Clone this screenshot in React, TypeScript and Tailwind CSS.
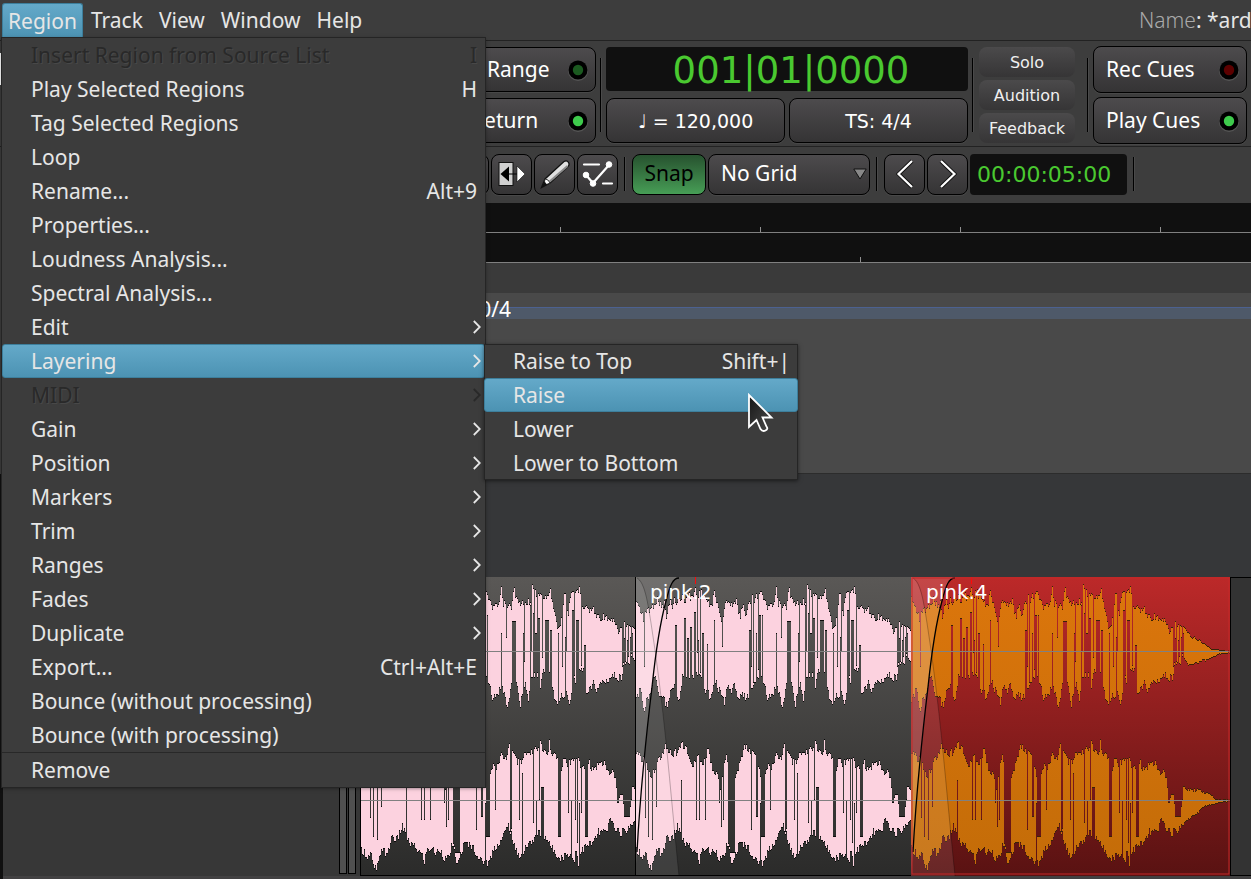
import React from 'react';

type Pt = [number, number];
type Notch = [number, number, number];

/* Envelope control points of the clip: x and y on a grid three times finer than the drawing. */
const TOP_1: Pt[] = [[36,85],[40,88],[45,105],[50,115],[57,125],[60,150],[63,155],[66,135],[72,110],[80,120],[88,105],[95,92],[105,88],[112,100],[118,110],[122,90],[130,150],[134,110],[140,95],[150,105],[153,85],[160,95],[170,80],[185,85],[195,75],[205,80],[212,70],[215,42],[219,75],[232,65],[245,80],[255,100],[266,108],[271,46],[275,85],[285,105],[290,130],[297,165],[303,110],[312,85],[325,100],[340,95],[350,140],[355,100],[370,130],[375,95],[385,80],[395,85],[405,65],[415,55],[420,90],[430,105],[445,110],[455,90],[458,45],[462,90],[475,110],[490,105],[497,55],[505,85],[515,105],[525,95],[549,88],[552,48],[560,65],[575,75],[590,80],[600,70],[604,55],[612,90],[620,120],[627,165],[635,170],[642,115],[650,65],[655,110],[660,125],[668,75],[680,65],[690,55],[698,62],[703,105],[712,105],[725,120],[735,115],[745,135],[760,140],[770,135],[785,155],[797,150],[805,175],[815,180],[825,160],[835,165],[850,170],[860,180],[875,200],[890,205],[905,215],[925,230],[935,238],[955,240],[970,243],[992,244]];
const BOT_1: Pt[] = [[36,390],[40,370],[45,380],[52,355],[57,400],[62,435],[68,400],[75,385],[83,375],[88,340],[95,320],[103,345],[110,395],[118,375],[125,400],[131,405],[135,395],[140,370],[148,365],[155,335],[166,400],[172,375],[175,330],[185,320],[195,325],[222,320],[235,325],[245,380],[252,360],[262,402],[265,370],[275,335],[290,370],[297,385],[304,408],[312,345],[320,365],[330,355],[337,350],[347,410],[352,380],[375,385],[380,350],[395,345],[410,315],[425,345],[432,385],[450,370],[460,345],[470,380],[478,425],[483,380],[492,330],[505,340],[516,420],[521,375],[530,345],[541,392],[547,335],[565,320],[575,360],[585,310],[598,330],[607,300],[615,370],[625,400],[630,415],[640,380],[655,375],[662,405],[670,360],[680,335],[695,300],[709,310],[713,380],[725,365],[735,345],[745,362],[760,340],[775,335],[795,320],[820,328],[823,290],[855,270],[870,288],[885,280],[905,275],[925,268],[940,262],[960,252],[992,245]];
const TOP_2: Pt[] = [[36,560],[45,545],[55,570],[62,545],[68,570],[75,600],[85,620],[92,600],[100,570],[107,550],[115,565],[125,510],[135,540],[150,545],[165,545],[174,510],[180,535],[186,516],[195,555],[205,585],[215,580],[225,560],[240,570],[256,538],[262,580],[275,600],[285,620],[292,650],[300,600],[310,545],[315,600],[335,620],[350,575],[365,525],[375,540],[390,545],[400,570],[412,610],[425,610],[432,590],[445,590],[460,550],[470,570],[475,555],[482,508],[487,545],[498,545],[505,575],[520,565],[535,550],[550,540],[565,535],[577,508],[582,540],[600,540],[604,512],[609,550],[625,560],[640,600],[647,545],[655,590],[670,560],[685,560],[697,580],[705,590],[722,575],[735,600],[750,575],[770,580],[785,605],[797,600],[803,640],[808,690],[820,655],[828,715],[845,715],[852,650],[865,660],[895,660],[915,665],[935,675],[950,690],[992,690]];
const BOT_2: Pt[] = [[36,840],[48,850],[58,865],[68,855],[75,895],[85,900],[95,865],[105,830],[115,867],[122,840],[130,800],[145,815],[155,790],[162,770],[170,795],[180,820],[195,830],[210,845],[222,860],[228,878],[235,845],[250,835],[262,855],[275,840],[290,872],[300,868],[310,830],[320,855],[328,892],[335,860],[345,830],[355,825],[370,830],[385,855],[395,875],[410,880],[422,882],[435,840],[455,820],[480,770],[488,790],[500,845],[518,862],[530,835],[550,820],[570,790],[590,800],[605,830],[625,855],[635,867],[660,855],[673,865],[677,885],[681,850],[688,850],[691,897],[695,850],[715,830],[735,820],[750,790],[775,790],[785,750],[800,775],[815,792],[840,780],[860,750],[890,735],[910,710],[930,705],[950,700],[970,692],[992,691]];

/* Dark slots cut from above ("down") or from below ("up"): start, width, depth. */
const DOWN_1: Notch[] = [[63,3,290],[222,3,250],[231,3,320],[297,3,230],[384,3,290],[390,3,345],[405,3,300],[475,3,205],[529,3,275],[549,3,245],[559,3,310],[568,3,310],[583,3,265],[641,3,290],[653,3,245],[679,3,330],[699,3,290],[823,4,290],[832,3,285],[840,3,260],[848,3,280]];
const UP_1: Notch[] = [[156,6,165],[184,6,145],[193,6,205],[201,5,170],[213,6,125],[226,3,210],[238,5,190],[252,3,222],[273,3,150],[378,6,180],[399,3,190],[408,5,135],[417,3,135],[458,3,190],[492,11,152],[526,5,190],[546,4,75],[556,3,130],[562,4,190],[571,5,145],[592,12,150],[607,6,180],[629,3,190],[651,3,200],[671,7,120],[684,8,150],[708,5,225],[827,5,205],[836,3,210],[845,3,200],[851,4,190]];
const DOWN_2: Notch[] = [[66,3,745],[75,3,800],[86,5,810],[98,3,710],[218,3,750],[229,3,750],[247,3,750],[288,4,700],[294,4,770],[300,3,750],[316,20,850],[384,3,780],[400,5,740],[413,12,800],[441,3,720],[486,6,790],[514,3,750],[556,3,760],[574,3,690],[629,10,800],[660,3,730],[680,3,750],[688,3,820],[699,3,730],[711,9,800],[808,6,700],[827,20,740]];
const UP_2: Notch[] = [[173,3,630],[412,3,700],[521,3,610],[563,5,690],[580,9,650],[668,3,690],[692,3,700]];

const CLIP = 319;

function level(points: Pt[], x: number) {
  let i = 1;
  while (i < points.length - 1 && points[i][0] < x) i++;
  const [ax, ay] = points[i - 1];
  const [bx, by] = points[i];
  return ay + ((by - ay) * (x - ax)) / (bx - ax);
}

function rough(i: number, seed: number) {
  const n = Math.sin(i * 12.9898 + seed * 78.233) * 43758.5453;
  return n - Math.floor(n);
}

function cut(notches: Notch[], x: number) {
  const hit = notches.find(([start, width]) => x + 1 >= start && x + 1 < start + width);
  return hit ? hit[2] : null;
}

function channel(top: Pt[], bottom: Pt[], down: Notch[], up: Notch[], seed: number) {
  const columns: Pt[] = [];
  for (let i = 0; i < CLIP; i++) {
    const x = 36 + i * 3;
    const fade = x > 920 ? 0.15 : x > 850 ? 0.4 : 1;
    let a = level(top, x) + (rough(i, seed) * 24 - 8) * fade;
    let b = level(bottom, x) - (rough(i, seed + 1) * 24 - 8) * fade;
    const d = cut(down, x);
    const u = cut(up, x);
    if (d !== null) a = Math.min(d, b - 6);
    else if (u !== null) b = Math.max(u, a + 6);
    columns.push([Math.round(a / 3 - 7), Math.max(Math.round(b / 3 - 7), Math.round(a / 3 - 7) + 1)]);
  }
  return columns;
}

const CHANNELS = [channel(TOP_1, BOT_1, DOWN_1, UP_1, 1), channel(TOP_2, BOT_2, DOWN_2, UP_2, 5)];

function Clip({ id, name, length, selected, fadeIn }: { id: string; name?: string; length: number; selected?: boolean; fadeIn?: boolean }) {
  const body = CHANNELS.map((c) => c.slice(0, length).map(([a, b], i) => `M${i + 0.5} ${a}V${b}`).join('')).join('');
  const tips = CHANNELS.map((c) =>
    c.slice(0, length).map(([a, b], i) => `M${i + 0.5} ${a - 1}v1M${i + 0.5} ${b}v1`).join(''),
  ).join('');
  return (
    <div className="relative shrink-0">
      <svg width={length} height={299} className="block" role="img" aria-label={name ?? 'pink'}>
        <defs>
          <linearGradient id={`${id}-back`} x1="0" y1="0" x2="0" y2="1">
            <stop offset="0" stopColor={selected ? '#bc2929' : '#5a5856'} />
            <stop offset="1" stopColor={selected ? '#591212' : '#2b2b2a'} />
          </linearGradient>
          <linearGradient id={`${id}-wave`} gradientUnits="userSpaceOnUse" x1="0" y1="0" x2="0" y2="299">
            <stop offset="0" stopColor={selected ? '#dc760c' : '#fcd2df'} />
            <stop offset="1" stopColor={selected ? '#c36c08' : '#fcd2df'} />
          </linearGradient>
        </defs>
        <rect width={length} height="299" fill={`url(#${id}-back)`} />
        <path d={body} stroke={`url(#${id}-wave)`} shapeRendering="crispEdges" />
        <path d={tips} stroke={selected ? '#3a2208' : '#0a0a0a'} shapeRendering="crispEdges" />
        <path d={`M0 74.5H${length}M0 223.5H${length}`} stroke="#808080" />
        {fadeIn && (
          <g>
            <path d="M0 0H44C38 1 35 8 31 24C25 46 21 72 17 110C11 160 5 220 2 275L0 299Z" fill="#fff" fillOpacity=".14" />
            <path d="M0 0C8 3 12 20 16 46C22 84 27 126 31 165C36 215 40 260 44 299H0Z" fill="#fff" fillOpacity=".09" />
            <path d="M2 1C9 5 12 20 16 46C22 84 27 126 31 165C36 215 40 260 44 299" fill="none" stroke="#000" strokeOpacity=".25" />
            <path d="M44 1C38 1 35 8 31 24C25 46 21 72 17 110C11 160 5 220 2 275" fill="none" stroke="#000" strokeWidth="1.3" />
          </g>
        )}
        {name && <path d="M60.5 0V7" stroke="#ff0808" />}
        {selected ? (
          <rect x="1" y="1" width={length - 2} height="296" fill="none" stroke="#c62828" />
        ) : (
          <path d={`M.5 0V299M0 298.5H${length}`} stroke="#000" />
        )}
      </svg>
      {name && <span className="absolute left-[15px] top-0 font-['DejaVu_Sans',sans-serif] text-[20px] leading-[30px] text-white">{name}</span>}
    </div>
  );
}

type Item = { label: string; keys?: string; sub?: boolean; off?: boolean; active?: boolean };

const REGION_ITEMS: Item[] = [
  { label: 'Insert Region from Source List', keys: 'I', off: true },
  { label: 'Play Selected Regions', keys: 'H' },
  { label: 'Tag Selected Regions' },
  { label: 'Loop' },
  { label: 'Rename...', keys: 'Alt+9' },
  { label: 'Properties...' },
  { label: 'Loudness Analysis...' },
  { label: 'Spectral Analysis...' },
  { label: 'Edit', sub: true },
  { label: 'Layering', sub: true, active: true },
  { label: 'MIDI', sub: true, off: true },
  { label: 'Gain', sub: true },
  { label: 'Position', sub: true },
  { label: 'Markers', sub: true },
  { label: 'Trim', sub: true },
  { label: 'Ranges', sub: true },
  { label: 'Fades', sub: true },
  { label: 'Duplicate', sub: true },
  { label: 'Export...', keys: 'Ctrl+Alt+E' },
  { label: 'Bounce (without processing)' },
  { label: 'Bounce (with processing)' },
];

const LAYER_ITEMS: Item[] = [
  { label: 'Raise to Top', keys: 'Shift+|' },
  { label: 'Raise', active: true },
  { label: 'Lower' },
  { label: 'Lower to Bottom' },
];

function MenuRow({ item }: { item: Item }) {
  const tone = item.off
    ? 'border-transparent text-[#292929] [text-shadow:1px_1px_0_#484848]'
    : item.active
      ? 'rounded-[3px] border-[#3d7f9c] bg-linear-to-b from-[#64a9c9] to-[#4c93b3] text-[#e6e6e6]'
      : 'border-transparent text-[#e6e6e6]';
  return (
    <button type="button" role="menuitem" disabled={item.off} className={`flex h-[34px] w-full items-center justify-between border pl-7 pr-[7px] pt-[2px] text-left ${tone}`}>
      <span>{item.label}</span>
      {item.keys && <span>{item.keys}</span>}
      {item.sub && (
        <svg width="8" height="14" viewBox="0 0 8 14" className="-mr-1 mb-[2px]" fill="none" stroke="currentColor" strokeWidth="1.8">
          <path d="M.8 1L6.8 7L.8 13" />
        </svg>
      )}
    </button>
  );
}

const KEY = 'border border-black bg-linear-to-b from-[#4d4b4d] to-[#353435] text-white shadow-[0_1px_0_#484848]';

function Led({ color }: { color: string }) {
  return (
    <svg width="22" height="22" viewBox="0 0 22 22" className="shrink-0">
      <circle cx="11" cy="12" r="10" fill="#555" />
      <circle cx="11" cy="11" r="9.5" fill="#000" />
      <circle cx="11" cy="11" r="5.2" fill={color} />
    </svg>
  );
}

function Divider({ short }: { short?: boolean }) {
  return <div className={`w-[2px] shrink-0 border-l border-black border-r border-r-[#4a4a4a] ${short ? 'h-[34px]' : 'h-[74px]'}`} />;
}

function LedKey({ label, color, className }: { label: string; color: string; className: string }) {
  return (
    <button type="button" className={`flex items-center justify-between rounded-[8px] pr-[6px] ${KEY} ${className}`}>
      <span>{label}</span>
      <Led color={color} />
    </button>
  );
}

function ToolKey({ label, children }: { label: string; children: React.ReactNode }) {
  return (
    <button type="button" aria-label={label} className={`flex size-[41px] shrink-0 items-center justify-center rounded-[8px] ${KEY}`}>
      {children}
    </button>
  );
}

function Ruler({ ticks }: { ticks: number[] }) {
  return (
    <div className="h-[30px] border-b border-[#808080] bg-[#101010]">
      <svg width="100%" height="29" className="block" aria-hidden="true">
        {ticks.map((x) => (
          <path key={x} d={`M${x + 0.5} 24V29`} stroke="#909090" />
        ))}
      </svg>
    </div>
  );
}

export default function App() {
  return (
    <div className="relative min-h-screen overflow-hidden bg-[#3d3d3d] font-['Noto_Sans','Open_Sans',sans-serif] text-[21px] text-[#e6e6e6]">
      <nav className="flex h-[41px] items-start justify-between overflow-hidden border-b border-[#222] pt-[3px] leading-[35px]">
        <div className="flex pl-[2px]" role="menubar">
          <button type="button" className="rounded-t-[3px] border border-b-0 border-[#3d7f9c] bg-linear-to-b from-[#64a9c9] to-[#4c93b3] px-[5px] leading-[34px]">
            Region
          </button>
          {['Track', 'View', 'Window', 'Help'].map((m) => (
            <button key={m} type="button" className="px-2">
              {m}
            </button>
          ))}
        </div>
        <div className="w-[112px] whitespace-nowrap">
          <span className="font-light text-[#aaa]">Name</span>: *ard
        </div>
      </nav>

      <section className="flex h-[106px] items-center border-b border-[#222] pr-1 pt-[3px]" aria-label="Transport">
        <div className="mb-[52px] h-8 w-[2px] shrink-0 bg-white" />
        <div className="ml-[484px] flex w-[110px] shrink-0 flex-col items-end gap-[6px] overflow-hidden">
          <LedKey label="Range" color="#1b5a20" className="h-[45px] w-[122px] pl-[12px]" />
          <LedKey label="Return" color="#3ecb4c" className="h-[45px] w-[134px] pl-[8px]" />
        </div>
        <div className="px-1">
          <Divider />
        </div>
        <div className="flex min-w-0 flex-1 flex-col gap-[7px] font-['DejaVu_Sans',sans-serif]">
          <div className="flex h-11 items-center justify-center rounded-[4px] bg-[#101010] pl-2 pt-[2px] text-[37px] leading-none text-[#4ac930]">001|01|0000</div>
          <div className="flex gap-1 text-[19px]">
            <button type="button" className={`h-[45px] flex-1 rounded-[8px] pt-[2px] ${KEY}`}>
              ♩ = 120,000
            </button>
            <button type="button" className={`h-[45px] flex-1 rounded-[8px] pt-[2px] ${KEY}`}>
              TS: 4/4
            </button>
          </div>
        </div>
        <div className="pl-1 pr-[5px]">
          <Divider />
        </div>
        <div className="flex w-24 shrink-0 flex-col gap-[3px] font-['DejaVu_Sans',sans-serif] text-base text-[#f0f0f0]">
          {['Solo', 'Audition', 'Feedback'].map((t) => (
            <button key={t} type="button" className="h-[30px] rounded-[8px] bg-linear-to-b from-[#4b4a4b] to-[#363536] pt-px">
              {t}
            </button>
          ))}
        </div>
        <div className="pl-3 pr-1">
          <Divider />
        </div>
        <div className="flex w-[154px] shrink-0 flex-col gap-1">
          <LedKey label="Rec Cues" color="#5c0000" className="h-[47px] pl-3" />
          <LedKey label="Play Cues" color="#3ecb4c" className="h-[47px] pl-3" />
        </div>
      </section>

      <section className="flex h-14 items-center gap-[2px] pb-[2px] pl-[448px]" aria-label="Editing">
        <ToolKey label="Audition">{null}</ToolKey>
        <ToolKey label="Timefx">
          <svg width="28" height="26" viewBox="0 0 28 26">
            <rect x="1" y="1.5" width="14" height="23" fill="#d0d0d0" stroke="#111" />
            <path d="M11 13H20" stroke="#000" />
            <path d="M11 5.500V20.500L2.500 13Z" fill="#000" />
            <path d="M19 5V21L27 13Z" fill="#fff" stroke="#111" strokeWidth=".6" />
          </svg>
        </ToolKey>
        <ToolKey label="Draw">
          <svg width="30" height="30" viewBox="0 0 30 30">
            <path d="M1.500 28.500L5 20L24 2.500Q27 1 28.500 3.500T27.500 8L10 24Z" fill="#e0e0e0" stroke="#111" strokeWidth="1.300" />
            <path d="M8.500 23.500L27.500 7" stroke="#8a8a8a" strokeWidth="2" />
            <path d="M5 20Q8.500 20 10 24L6.500 25.500L4.500 23Z" fill="#fff" stroke="#111" strokeWidth=".8" />
            <path d="M1.500 28.500L4.200 22.500L7 25.700Z" fill="#111" />
          </svg>
        </ToolKey>
        <ToolKey label="Edit contents">
          <svg width="32" height="28" viewBox="0 0 32 28" fill="#fff" stroke="#fff">
            <path d="M2 4.500H17M21 23.500H30" strokeWidth="2.200" strokeLinecap="round" />
            <path d="M4 15L11 23L27 5" fill="none" strokeWidth="2.200" />
            <circle cx="4" cy="15" r="2.800" />
            <circle cx="11" cy="23.500" r="2.800" />
            <circle cx="27" cy="4.500" r="2.800" />
          </svg>
        </ToolKey>
        <div className="px-1">
          <Divider short />
        </div>
        <button type="button" className="h-[41px] w-[74px] shrink-0 rounded-[8px] border border-black bg-linear-to-b from-[#27522f] to-[#479e56] text-black">
          Snap
        </button>
        <button type="button" aria-haspopup="listbox" className={`flex h-[41px] w-[162px] shrink-0 items-center justify-between rounded-[8px] pl-3 pr-[2px] ${KEY}`}>
          No Grid
          <svg width="14" height="12" viewBox="0 0 14 12">
            <path d="M.8 1H13.200L7 11Z" fill="#888" stroke="#111" />
          </svg>
        </button>
        <div className="px-1">
          <Divider short />
        </div>
        <ToolKey label="Nudge earlier">
          <svg width="18" height="30" viewBox="0 0 18 30" fill="none">
            <path d="M16 2L2.500 15L16 28" stroke="#111" strokeWidth="4" />
            <path d="M16 2L2.500 15L16 28" stroke="#fff" strokeWidth="2.200" />
          </svg>
        </ToolKey>
        <ToolKey label="Nudge later">
          <svg width="18" height="30" viewBox="0 0 18 30" fill="none">
            <path d="M2 2L15.500 15L2 28" stroke="#111" strokeWidth="4" />
            <path d="M2 2L15.500 15L2 28" stroke="#fff" strokeWidth="2.200" />
          </svg>
        </ToolKey>
        <div className="flex h-[41px] w-[157px] shrink-0 items-center rounded-[4px] bg-[#101010] pl-[7px] font-['DejaVu_Sans',sans-serif] text-[22px] text-[#4ac930]">00:00:05:00</div>
        <div className="px-1">
          <Divider short />
        </div>
      </section>

      <section aria-label="Rulers" className="pl-[2px]">
        <Ruler ticks={[558, 758, 958, 1158]} />
        <Ruler ticks={[858]} />
        <div className="h-[30px] bg-[#3a3a3a]" />
        <div className="relative h-[181px] border-b border-[#2c2c2c] bg-[#494949]">
          <div className="absolute inset-x-0 top-[14px] h-3 border-t border-[#4c6190] bg-[#4e5969]" />
          <div className="relative ml-[484px] flex w-[25px] justify-end overflow-hidden whitespace-nowrap leading-[32px] text-white">0/4</div>
        </div>
      </section>

      <main className="border-l-[3px] border-[#101010] bg-[#363739] pt-[103px]">
        <div className="flex h-[299px]">
          <div className="flex-none basis-[336px] bg-[#373737]" />
          <div className="flex w-[21px] shrink-0 gap-px bg-[#373737] pb-[2px]">
            <div className="w-2 border border-black bg-[#505050]" />
            <div className="w-2 border border-black bg-[#505050]" />
          </div>
          <Clip id="a" length={275} />
          <Clip id="b" name="pink.2" length={276} fadeIn />
          <Clip id="c" name="pink.4" length={319} selected fadeIn />
          <div className="min-w-0 flex-1 border border-r-0 border-black bg-[#333]" />
        </div>
        <div className="h-[3px] bg-[#424142]" />
      </main>

      <div role="menu" aria-label="Region" className="absolute left-[2px] top-[38px] w-[483px] bg-[#3c3c3c] shadow-[0_0_0_1px_#252525,0_1px_4px_#0008]">
        {REGION_ITEMS.map((item) => (
          <MenuRow key={item.label} item={item} />
        ))}
        <hr className="border-t border-[#282828]" />
        <MenuRow item={{ label: 'Remove' }} />
      </div>

      <div role="menu" aria-label="Layering" className="absolute left-[484px] top-[344px] w-[314px] bg-[#3c3c3c] shadow-[inset_0_0_0_1px_#252525,0_1px_4px_#0008]">
        {LAYER_ITEMS.map((item) => (
          <MenuRow key={item.label} item={item} />
        ))}
      </div>

      <svg className="pointer-events-none absolute left-[746px] top-[391px]" width="30" height="44" viewBox="0 0 30 44" aria-hidden="true">
        <defs>
          <linearGradient id="pointer" x1="0" y1="0" x2="1" y2="1">
            <stop offset="0" stopColor="#161616" />
            <stop offset="1" stopColor="#4a4a4a" />
          </linearGradient>
        </defs>
        <path d="M3 4V36L10.500 29L14.500 38Q16.500 41 19.500 39.500T20.500 35.500L16.500 26.500H25.500Z" fill="url(#pointer)" stroke="#fff" strokeWidth="1.800" />
      </svg>
    </div>
  );
}
